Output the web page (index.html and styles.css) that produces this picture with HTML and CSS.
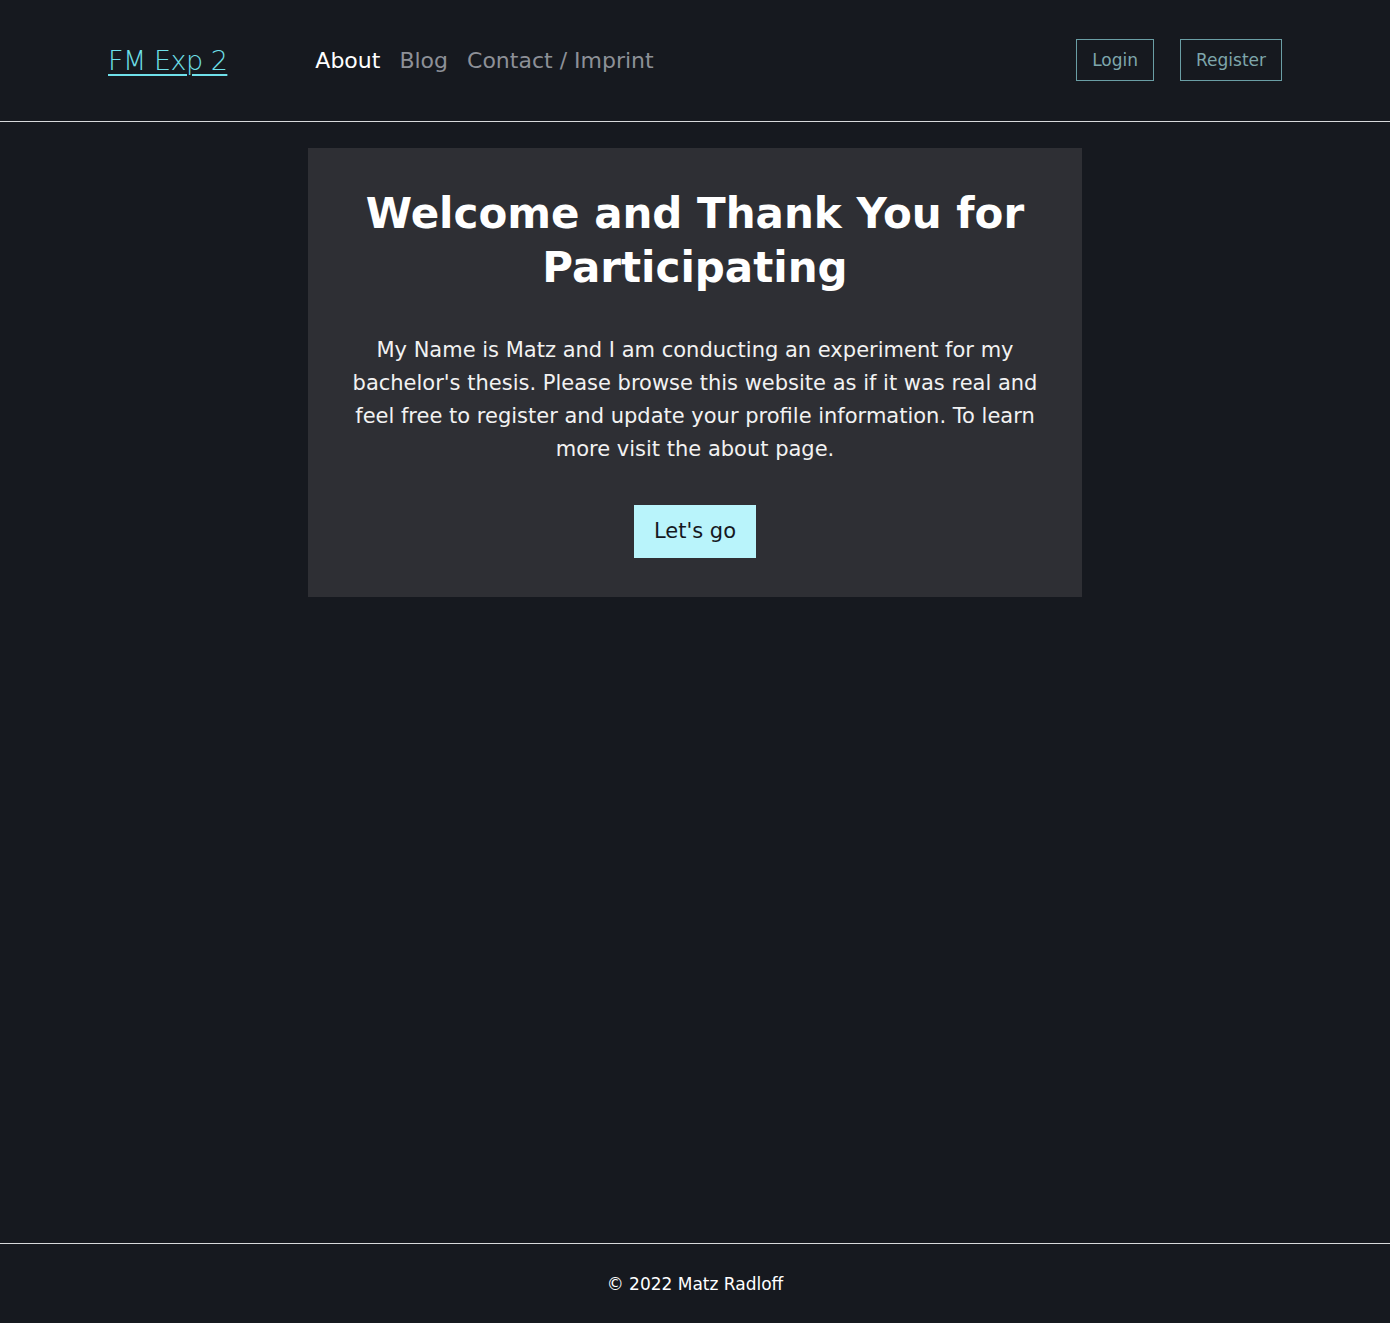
FILE: index.html
```html
<!DOCTYPE html>
<html lang="en">
<head>
<meta charset="utf-8">
<title>FM Exp 2</title>
<link rel="stylesheet" href="styles.css">
</head>
<body>
<div class="page">
  <header class="header">
    <a class="logo" href="#">FM Exp 2</a>
    <nav class="nav">
      <a class="nav-link active" href="#">About</a>
      <a class="nav-link" href="#">Blog</a>
      <a class="nav-link" href="#">Contact / Imprint</a>
    </nav>
    <div class="auth">
      <a class="auth-btn" href="#">Login</a>
      <a class="auth-btn" href="#">Register</a>
    </div>
  </header>
  <main class="main">
    <section class="card">
      <h1 class="title">Welcome and Thank You for Participating</h1>
      <p class="intro">My Name is Matz and I am conducting an experiment for my bachelor's thesis. Please browse this website as if it was real and feel free to register and update your profile information. To learn more visit the about page.</p>
      <a class="cta" href="#">Let's go</a>
    </section>
  </main>
  <footer class="footer">© 2022 Matz Radloff</footer>
</div>
</body>
</html>
```

FILE: styles.css
```css
html, body {
  margin: 0;
  padding: 0;
  background: #16191f;
  font-family: "DejaVu Sans", "Noto Sans", sans-serif;
}
.page {
  min-height: 1323px;
  display: flex;
  flex-direction: column;
}
.header {
  height: 121px;
  border-bottom: 1px solid #d8dadc;
  display: flex;
  align-items: center;
  padding: 0 108px;
  box-sizing: content-box;
}
.logo {
  color: #6fe0ea;
  font-size: 27px;
  font-weight: 300;
  text-decoration: underline;
  text-underline-offset: 4px;
  text-decoration-thickness: 2px;
  margin-right: 88px;
  letter-spacing: -0.5px;
}
.nav {
  display: flex;
  gap: 19px;
  flex: 1;
}
.nav-link {
  color: #8d9097;
  font-size: 22px;
  text-decoration: none;
}
.nav-link.active {
  color: #ffffff;
}
.auth {
  display: flex;
  gap: 26px;
  margin-top: -2px;
}
.auth-btn {
  display: block;
  border: 1px solid #6a9ea5;
  color: #7ea6ab;
  font-size: 17px;
  text-decoration: none;
  padding: 0 15px;
  height: 40px;
  line-height: 40px;
}
.main {
  flex: 1;
  display: flex;
  justify-content: center;
  padding-top: 26px;
}
.card {
  width: 774px;
  height: 449px;
  box-sizing: border-box;
  background: #2e2f34;
  display: flex;
  flex-direction: column;
  align-items: center;
  padding: 39px 34px 0;
  text-align: center;
}
.title {
  margin: 0;
  color: #ffffff;
  font-size: 42px;
  font-weight: 700;
  line-height: 54px;
}
.intro {
  margin: 39px 0 0;
  color: #f2f2f2;
  font-size: 21px;
  line-height: 33px;
}
.cta {
  margin-top: 39px;
  background: #b9f4fb;
  color: #15181e;
  font-size: 21px;
  text-decoration: none;
  width: 122px;
  height: 53px;
  line-height: 53px;
}
.footer {
  border-top: 1px solid #d8dadc;
  height: 79px;
  display: flex;
  justify-content: center;
  align-items: center;
  color: #ffffff;
  font-size: 17px;
}
```
